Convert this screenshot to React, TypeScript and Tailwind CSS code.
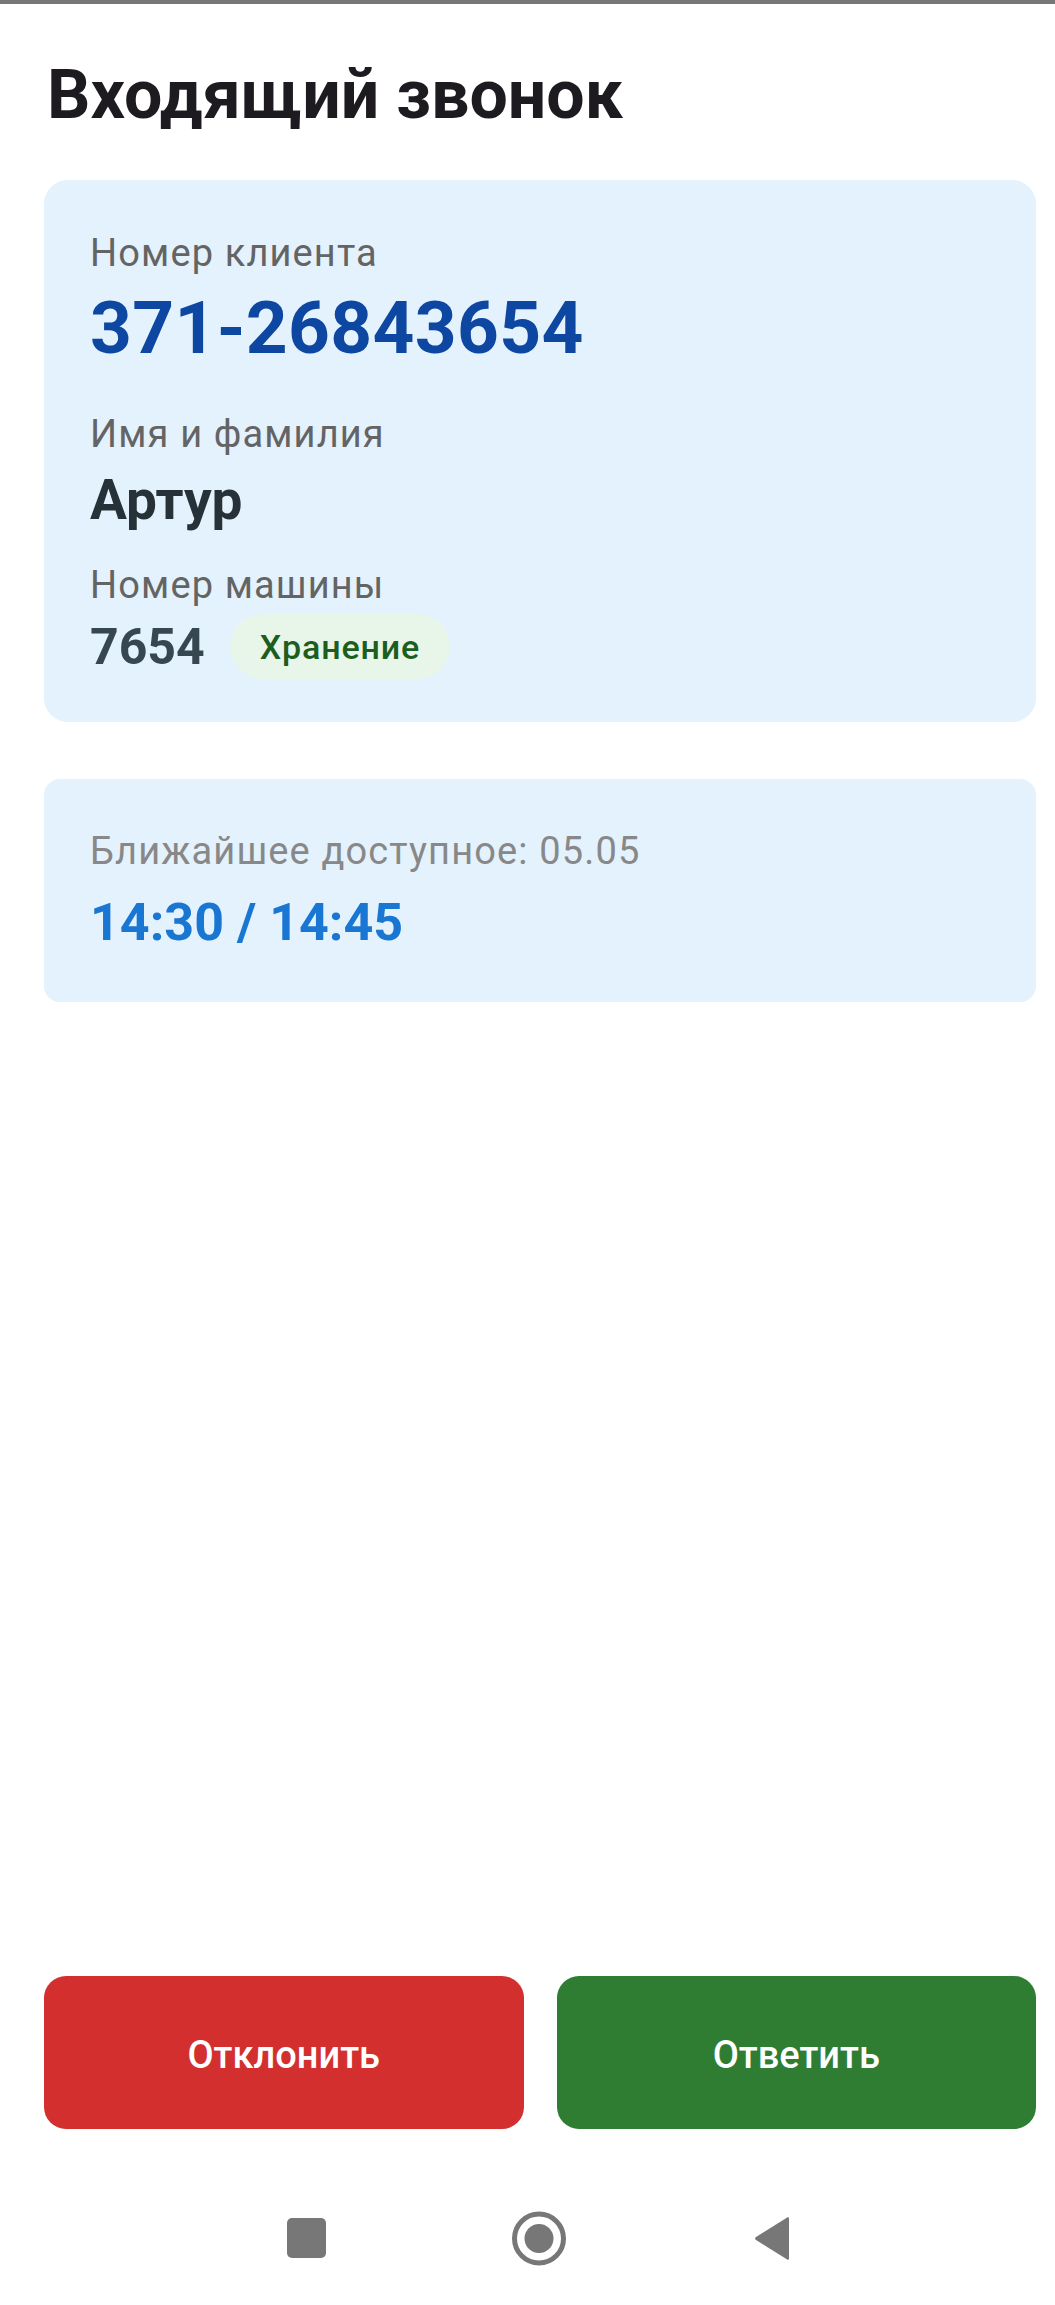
export default function App() {
  return (
    <div className="flex h-[2305px] w-full flex-col bg-white font-['Roboto',sans-serif]">
      <div className="h-[4px] bg-[#777777]" />

      <div className="flex flex-col pl-[44px] pr-[19px]">
        <h1 className="mt-[57px] pl-[3px] text-[68px] font-bold leading-none text-[#1d1b20]">
          Входящий звонок
        </h1>

        {/* карточка клиента */}
        <div className="mt-[51px] flex flex-col rounded-[24px] bg-[#e3f2fd] px-[46px] pt-[54px] pb-[43px]">
          <p className="text-[38px] leading-none tracking-[0.03em] text-[#646464]">Номер клиента</p>
          <p className="mt-[20px] text-[73px] font-bold leading-none tracking-[0.005em] text-[#0d47a1]">371-26843654</p>
          <p className="mt-[50px] text-[38px] leading-none tracking-[0.03em] text-[#646464]">Имя и фамилия</p>
          <p className="mt-[20px] text-[55px] font-bold leading-none text-[#263238]">Артур</p>
          <p className="mt-[38px] text-[38px] leading-none tracking-[0.03em] text-[#646464]">Номер машины</p>
          <div className="mt-[10px] flex h-[65px] items-center gap-[25px]">
            <span className="text-[50px] font-bold leading-none text-[#37474f]">7654</span>
            <span className="flex h-[65px] items-center rounded-full bg-[#e8f5e9] px-[30px] text-[34px] font-medium leading-none tracking-[0.025em] text-[#1b5e20]">
              Хранение
            </span>
          </div>
        </div>

        {/* ближайшее время */}
        <div className="mt-[57px] flex flex-col rounded-[16px] bg-[#e3f2fd] px-[46px] pt-[53px] pb-[53px]">
          <p className="text-[38px] leading-none tracking-[0.03em] text-[#888888]">Ближайшее доступное: 05.05</p>
          <p className="mt-[27px] text-[52px] font-bold leading-none text-[#1976d2]">14:30 / 14:45</p>
        </div>
      </div>

      <div className="flex-1" />

      <div className="mb-[42px] flex gap-[33px] pl-[44px] pr-[19px]">
        <button className="flex h-[153px] flex-1 items-center justify-center rounded-[22px] bg-[#d32f2f] pt-[6px] text-[38px] font-medium text-white">
          Отклонить
        </button>
        <button className="flex h-[153px] flex-1 items-center justify-center rounded-[22px] bg-[#2e7d32] pt-[6px] text-[38px] font-medium text-white">
          Ответить
        </button>
      </div>

      {/* системная навигация */}
      <div className="flex h-[134px] items-center justify-center gap-[186px] pl-[24px]">
        <div className="h-[40px] w-[39px] rounded-[5px] bg-[#777777]" />
        <svg width="54" height="55" viewBox="0 0 54 55" aria-hidden="true">
          <circle cx="27" cy="27.5" r="24.5" fill="none" stroke="#777777" strokeWidth="5" />
          <circle cx="27" cy="27.5" r="14.5" fill="#777777" />
        </svg>
        <svg width="40" height="47" viewBox="0 0 40 47" aria-hidden="true">
          <path d="M36 2 L37 3 L37 44 L36 45 L4 25 Q2 23.5 4 22 Z" fill="#777777" />
        </svg>
      </div>
    </div>
  );
}
